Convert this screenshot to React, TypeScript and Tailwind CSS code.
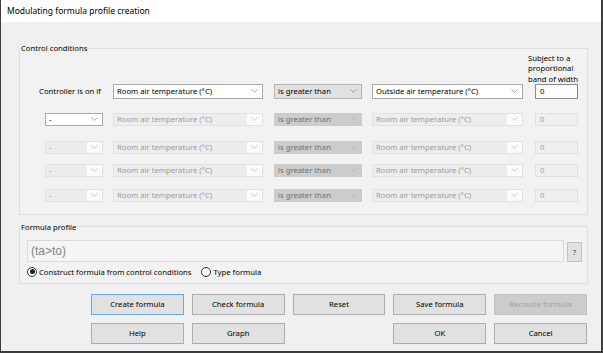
import React from "react"

type Kind = "white" | "gray" | "off" | "grayOff"

function Chevron({ color }: { color: string }) {
  return (
    <svg width="7" height="4" viewBox="0 0 7 4" fill="none">
      <path d="M0.5 0.5 L3.5 3.3 L6.5 0.5" stroke={color} strokeWidth="0.9" />
    </svg>
  )
}

function Combo({ text, kind, className }: { text: string; kind: Kind; className: string }) {
  const box = {
    white: "bg-white border-[#a9a9a9] text-black",
    gray: "bg-[#e1e1e1] border-[#b4b4b4] text-black",
    off: "bg-[#ededed] border-[#e2e2e2] text-[#9b9b9b]",
    grayOff: "bg-[#cccccc] border-[#cccccc] text-[#707070]",
  }[kind]
  const arrow = {
    white: "bg-transparent",
    gray: "bg-transparent",
    off: "bg-[#fbfbfb]",
    grayOff: "bg-transparent",
  }[kind]
  const chev = kind === "white" ? "#9c9c9c" : kind === "gray" ? "#9a9a9a" : kind === "off" ? "#c6c6c6" : "#b8b8b8"
  return (
    <div className={`flex items-stretch border ${box} ${className}`}>
      <div className="flex-1 flex items-center pl-[3px] whitespace-nowrap overflow-hidden">{text}</div>
      <div className={`w-[15px] flex items-center justify-center ${arrow}`}>
        <Chevron color={chev} />
      </div>
    </div>
  )
}

function Field({ on, className }: { on: boolean; className: string }) {
  return (
    <div
      className={`flex items-center pl-[4px] border ${
        on ? "bg-white border-[#8c8c8c] text-black" : "bg-[#efefef] border-[#e0e0e0] text-[#a0a0a0]"
      } ${className}`}
    >
      0
    </div>
  )
}

function Row({ first, mt }: { first: boolean; mt: string }) {
  return (
    <div className={`flex items-center h-[13px] ml-[16px] ${mt}`}>
      <div className="w-[67px] h-full flex justify-end">
        <Combo text="-" kind={first ? "white" : "off"} className="w-[58px] h-full" />
      </div>
      <Combo text="Room air temperature (°C)" kind="off" className="ml-[10px] w-[150px] h-full" />
      <Combo text="is greater than" kind="grayOff" className="ml-[11px] w-[88px] h-full" />
      <Combo text="Room air temperature (°C)" kind="off" className="ml-[10px] w-[151px] h-full" />
      <Field on={false} className="ml-[12px] w-[43px] h-full" />
    </div>
  )
}

function Btn({ label, kind = "normal" }: { label: string; kind?: "normal" | "default" | "off" }) {
  const cls = {
    normal: "bg-[#e1e1e1] border-[#adadad] text-black",
    default: "bg-[#e1e1e1] border-[#6aa8e8] text-black",
    off: "bg-[#cccccc] border-[#c2c2c2] text-[#a2a2a2]",
  }[kind]
  return <div className={`h-[21px] flex items-center justify-center border ${cls}`}>{label}</div>
}

function Radio({ on }: { on: boolean }) {
  return (
    <div className="w-[10px] h-[10px] rounded-full border border-[#333333] bg-white flex items-center justify-center">
      {on && <div className="w-[5px] h-[5px] rounded-full bg-[#222222]" />}
    </div>
  )
}

export default function App() {
  return (
    <div className="w-[603px] h-[353px] overflow-hidden bg-[#f0f0f0] border-l border-r-2 border-b-2 border-[#3c3c3c] font-['Noto_Sans',sans-serif] text-[7.7px] leading-[10px] text-black flex flex-col">
      <div className="h-[22px] shrink-0 bg-white flex items-center pl-[6px] text-[8.5px]">
        Modulating formula profile creation
      </div>

      <div className="pl-[18px] flex flex-col">
        {/* Control conditions */}
        <fieldset className="mt-[21px] w-[569px] border border-[#dfdfdf] bg-[#f2f2f2] pb-[12px]">
          <legend className="ml-[1px] leading-[10px] bg-[#f0f0f0]">Control conditions</legend>
          <div className="ml-[508px] h-[31px] -mt-[0.5px] leading-[10.5px]">
            Subject to a
            <br />
            proportional
            <br />
            band of width
          </div>
          <div className="flex items-center h-[15px] ml-[16px]">
            <div className="w-[67px] text-right pr-[2px] whitespace-nowrap">Controller is on if</div>
            <Combo text="Room air temperature (°C)" kind="white" className="ml-[10px] w-[150px] h-full" />
            <Combo text="is greater than" kind="gray" className="ml-[11px] w-[88px] h-full" />
            <Combo text="Outside air temperature (°C)" kind="white" className="ml-[10px] w-[151px] h-full" />
            <Field on className="ml-[12px] w-[43px] h-full" />
          </div>
          <Row first mt="mt-[14px]" />
          <Row first={false} mt="mt-[15px]" />
          <Row first={false} mt="mt-[10px]" />
          <Row first={false} mt="mt-[12px]" />
        </fieldset>

        {/* Formula profile */}
        <fieldset className="mt-[7px] w-[569px] border border-[#dfdfdf] bg-[#f2f2f2] pb-[6px]">
          <legend className="ml-[1px] leading-[10px] bg-[#f0f0f0]">Formula profile</legend>
          <div className="flex items-start mt-[8px] ml-[7px]">
            <div className="w-[537px] h-[22px] border border-[#dcdcdc] bg-[#f5f5f5] text-[#858585] font-['Liberation_Sans',sans-serif] text-[12px] pl-[3px] flex items-center">
              (ta&gt;to)
            </div>
            <div className="ml-[3px] mt-[2px] w-[15px] h-[20px] border border-[#c4c4c4] bg-[#e1e1e1] flex items-center justify-center text-[#444444]">
              ?
            </div>
          </div>
          <div className="mt-[5px] ml-[7px] h-[10px] flex items-center">
            <Radio on />
            <span className="ml-[2px]">Construct formula from control conditions</span>
            <div className="ml-[10px]">
              <Radio on={false} />
            </div>
            <span className="ml-[2px]">Type formula</span>
          </div>
        </fieldset>

        {/* Buttons */}
        <div className="mt-[10px] ml-[72px] w-[496px] grid grid-cols-5 gap-x-[8px] gap-y-[8px]">
          <Btn label="Create formula" kind="default" />
          <Btn label="Check formula" />
          <Btn label="Reset" />
          <Btn label="Save formula" />
          <Btn label="Recreate formula" kind="off" />
          <Btn label="Help" />
          <Btn label="Graph" />
          <div />
          <Btn label="OK" />
          <Btn label="Cancel" />
        </div>
      </div>
    </div>
  )
}
